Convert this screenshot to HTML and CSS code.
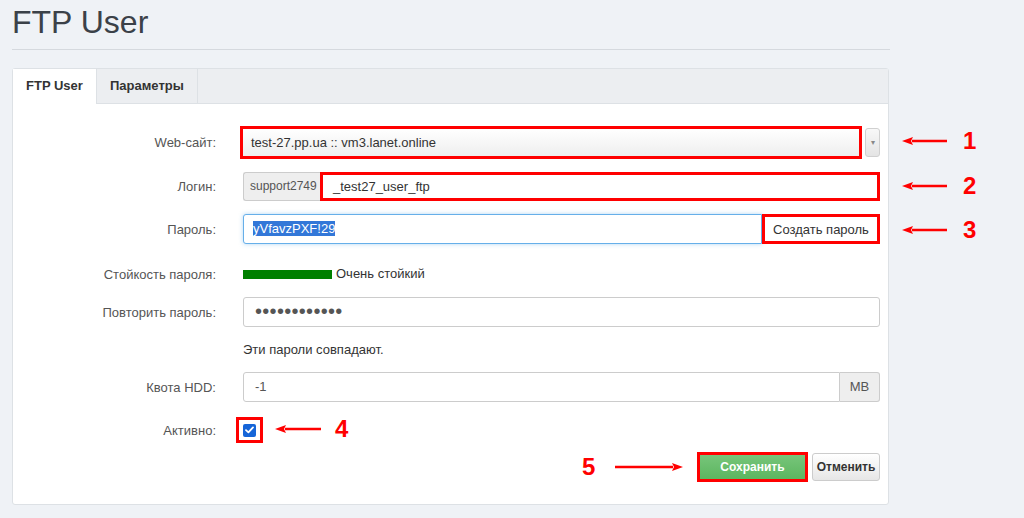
FILE: index.html
```html
<!DOCTYPE html>
<html lang="ru">
<head>
    <meta charset="UTF-8">
    <title>FTP User</title>
    <link rel="stylesheet" href="styles.css">
</head>
<body>
    <div class="page">
        <div class="container">
            <h1 class="title">FTP User</h1>
            <hr class="divider">

            <div class="panel">
                <div class="tabs">
                    <div class="tab active">FTP User</div>
                    <div class="tab">Параметры</div>
                </div>

                <div class="form">
                    <!-- Сайт -->
                    <div class="row">
                        <label class="label">Web-сайт:</label>
                        <div class="select">
                            <div class="select-value mark">test-27.pp.ua :: vm3.lanet.online</div>
                            <div class="select-arrow">&#9662;</div>
                        </div>
                    </div>

                    <!-- Логин -->
                    <div class="row row-login">
                        <label class="label">Логин:</label>
                        <div class="group">
                            <span class="addon addon-left">support2749</span>
                            <div class="input input-login mark">_test27_user_ftp</div>
                        </div>
                    </div>

                    <!-- Пароль -->
                    <div class="row row-pass">
                        <label class="label">Пароль:</label>
                        <div class="group">
                            <div class="input input-focus"><span class="selected">yVfavzPXF!29</span></div>
                            <button class="btn-gen mark">Создать пароль</button>
                        </div>
                    </div>

                    <div class="row row-strength">
                        <label class="label">Стойкость пароля:</label>
                        <div class="strength">
                            <span class="strength-bar"></span>
                            <span>Очень стойкий</span>
                        </div>
                    </div>

                    <div class="row row-repeat">
                        <label class="label">Повторить пароль:</label>
                        <div class="input"><span class="dots">••••••••••••</span></div>
                    </div>

                    <div class="row row-match">
                        <span></span>
                        <div class="hint">Эти пароли совпадают.</div>
                    </div>

                    <div class="row row-quota">
                        <label class="label">Квота HDD:</label>
                        <div class="group">
                            <div class="input input-quota">-1</div>
                            <span class="addon addon-right">MB</span>
                        </div>
                    </div>

                    <div class="row row-active">
                        <label class="label">Активно:</label>
                        <div>
                            <span class="check-box mark">
                                <span class="checkbox">
                                    <svg width="9" height="8" viewBox="0 0 9 8"><path d="M1 4.2 L3.4 6.4 L8 1.4" fill="none" stroke="#fff" stroke-width="1.8" stroke-linecap="round" stroke-linejoin="round"/></svg>
                                </span>
                            </span>
                        </div>
                    </div>

                    <div class="actions">
                        <button class="btn-save mark">Сохранить</button>
                        <button class="btn-cancel">Отменить</button>
                    </div>
                </div>
            </div>
        </div>

        <!-- пометки поверх скриншота -->
        <div class="note note-1">
            <svg class="arrow" width="46" height="10" viewBox="0 0 46 10"><path d="M10 5 H45" stroke="#f00" stroke-width="2.5"/><path d="M0 5 L11 1 L9 5 L11 9 Z" fill="#f00"/></svg>
            <span class="num">1</span>
        </div>
        <div class="note note-2">
            <svg class="arrow" width="46" height="10" viewBox="0 0 46 10"><path d="M10 5 H45" stroke="#f00" stroke-width="2.5"/><path d="M0 5 L11 1 L9 5 L11 9 Z" fill="#f00"/></svg>
            <span class="num">2</span>
        </div>
        <div class="note note-3">
            <svg class="arrow" width="46" height="10" viewBox="0 0 46 10"><path d="M10 5 H45" stroke="#f00" stroke-width="2.5"/><path d="M0 5 L11 1 L9 5 L11 9 Z" fill="#f00"/></svg>
            <span class="num">3</span>
        </div>
        <div class="note note-4">
            <svg class="arrow" width="47" height="10" viewBox="0 0 47 10"><path d="M10 5 H46" stroke="#f00" stroke-width="2.5"/><path d="M0 5 L11 1 L9 5 L11 9 Z" fill="#f00"/></svg>
            <span class="num">4</span>
        </div>
        <div class="note note-5">
            <span class="num">5</span>
            <svg class="arrow" width="68" height="10" viewBox="0 0 68 10"><path d="M0 5 H58" stroke="#f00" stroke-width="2.5"/><path d="M68 5 L57 1 L59 5 L57 9 Z" fill="#f00"/></svg>
        </div>
    </div>
</body>
</html>
```

FILE: styles.css
```css
body {
    margin: 0;
    padding: 0;
    background-color: #eff2f6;
    font-family: "Liberation Sans", Arial, sans-serif;
    font-size: 13px;
    color: #333;
}
.page {
    position: relative;
    width: 1024px;
    height: 518px;
    overflow: hidden;
}
.container {
    width: 878px;
    margin-left: 12px;
}
.title {
    margin: 0;
    padding-top: 4px;
    font-size: 32px;
    line-height: 36px;
    font-weight: normal;
    color: #3b4148;
}
.divider {
    margin: 9px 0 0;
    border: none;
    border-top: 1px solid #d5d9de;
}

/* панель с вкладками */
.panel {
    width: 877px;
    box-sizing: border-box;
    margin-top: 18px;
    background: #fff;
    border: 1px solid #dde1e5;
    border-radius: 3px;
}
.tabs {
    display: flex;
    height: 34px;
    background: #eceef1;
    border-bottom: 1px solid #dde1e5;
}
.tab {
    padding: 0 13px;
    line-height: 34px;
    font-size: 13px;
    font-weight: bold;
    color: #333;
    border-right: 1px solid #dde1e5;
}
.tab.active {
    width: 57px;
    padding: 0 13px;
    background: #fff;
    height: 35px;
}

.form {
    padding: 22px 8px 22px 0;
}
.row {
    display: grid;
    grid-template-columns: 203px 1fr;
    column-gap: 27px;
    align-items: center;
    margin-top: 14px;
}
.row:first-child {
    margin-top: 0;
}
.label {
    text-align: right;
    color: #555;
}
.mark {
    border: 3px solid #f00 !important;
    box-sizing: border-box;
}

/* select */
.select {
    display: flex;
    align-items: center;
    height: 33px;
}
.select-value {
    width: 622px;
    height: 33px;
    margin-left: -3px;
    padding-left: 8px;
    line-height: 27px;
    background: linear-gradient(#fff, #eeeeee);
}
.select-arrow {
    width: 15px;
    height: 29px;
    margin-left: 3px;
    box-sizing: border-box;
    border: 1px solid #d0d0d0;
    border-radius: 3px;
    background: linear-gradient(#f8f8f8, #e4e4e4);
    text-align: center;
    line-height: 27px;
    font-size: 8px;
    color: #888;
}

.group {
    display: flex;
    height: 30px;
}
.addon {
    box-sizing: border-box;
    background: #eee;
    border: 1px solid #ccc;
    line-height: 28px;
    color: #555;
    padding: 0 6px;
}
.addon-left {
    width: 77px;
    font-size: 12px;
    border-right: none;
    border-radius: 3px 0 0 3px;
    white-space: nowrap;
}
.addon-right {
    width: 40px;
    text-align: center;
    border-left: none;
    border-radius: 0 3px 3px 0;
}
.input {
    box-sizing: border-box;
    height: 30px;
    border: 1px solid #ccc;
    border-radius: 3px;
    padding: 0 11px;
    line-height: 28px;
    background: #fff;
}
.row-login {
    margin-top: 13px;
}
.row-login .group {
    height: 29px;
}
.row-login .addon {
    line-height: 27px;
}
.input-login {
    flex: 1;
    height: 29px;
    padding-left: 10px;
    line-height: 23px;
    border-radius: 0;
}
.input-focus {
    flex: 1;
    padding-left: 9px;
    border-color: #66afe9;
    border-radius: 3px 0 0 3px;
    box-shadow: 0 0 4px rgba(102, 175, 233, 0.5);
}
.selected {
    background: #3277d8;
    color: #fff;
}
.btn-gen {
    width: 118px;
    height: 30px;
    background: #fff;
    font-family: inherit;
    font-size: 13px;
    color: #333;
    padding: 0;
}
.input-quota {
    flex: 1;
    border-radius: 3px 0 0 3px;
    padding-left: 11px;
    color: #555;
}

.row-pass {
    margin-top: 13px;
}
.row-strength {
    margin-top: 21px;
}
.strength {
    display: flex;
    align-items: center;
    line-height: 18px;
}
.strength-bar {
    width: 89px;
    height: 9px;
    background: #008000;
    margin-right: 4px;
}
.row-repeat {
    margin-top: 14px;
}
.dots {
    font-size: 20px;
    letter-spacing: 0.3px;
    color: #555;
    vertical-align: top;
    line-height: 27px;
}
.row-match {
    margin-top: 14px;
    line-height: 18px;
}
.row-quota {
    margin-top: 13px;
}
.row-active {
    margin-top: 15px;
}
.check-box {
    display: flex;
    align-items: center;
    justify-content: center;
    width: 27px;
    height: 26px;
    margin-left: -7px;
}
.checkbox {
    display: flex;
    align-items: center;
    justify-content: center;
    width: 13px;
    height: 13px;
    border-radius: 2px;
    background: #1565d8;
}

.actions {
    display: flex;
    justify-content: flex-end;
    align-items: center;
    gap: 4px;
    margin-top: 9px;
}
.btn-save {
    width: 111px;
    height: 30px;
    background: linear-gradient(#77c57a, #5cb660);
    color: #fff;
    font-family: inherit;
    font-size: 12px;
    font-weight: bold;
}
.btn-cancel {
    width: 68px;
    height: 28px;
    border: 1px solid #ccc;
    border-radius: 3px;
    background: linear-gradient(#fff, #e6e6e6);
    color: #333;
    font-family: inherit;
    font-size: 12px;
    font-weight: bold;
    padding: 0;
}

/* пометки */
.note {
    position: absolute;
    display: flex;
    align-items: center;
    height: 24px;
}
.num {
    font-size: 24px;
    font-weight: bold;
    color: #f00;
    line-height: 24px;
}
.arrow {
    display: block;
}
.note-1 { left: 902px; top: 129px; gap: 15px; }
.note-2 { left: 902px; top: 174px; gap: 15px; }
.note-3 { left: 902px; top: 218px; gap: 15px; }
.note-4 { left: 275px; top: 417px; gap: 13px; }
.note-5 { left: 582px; top: 455px; gap: 20px; }
```
